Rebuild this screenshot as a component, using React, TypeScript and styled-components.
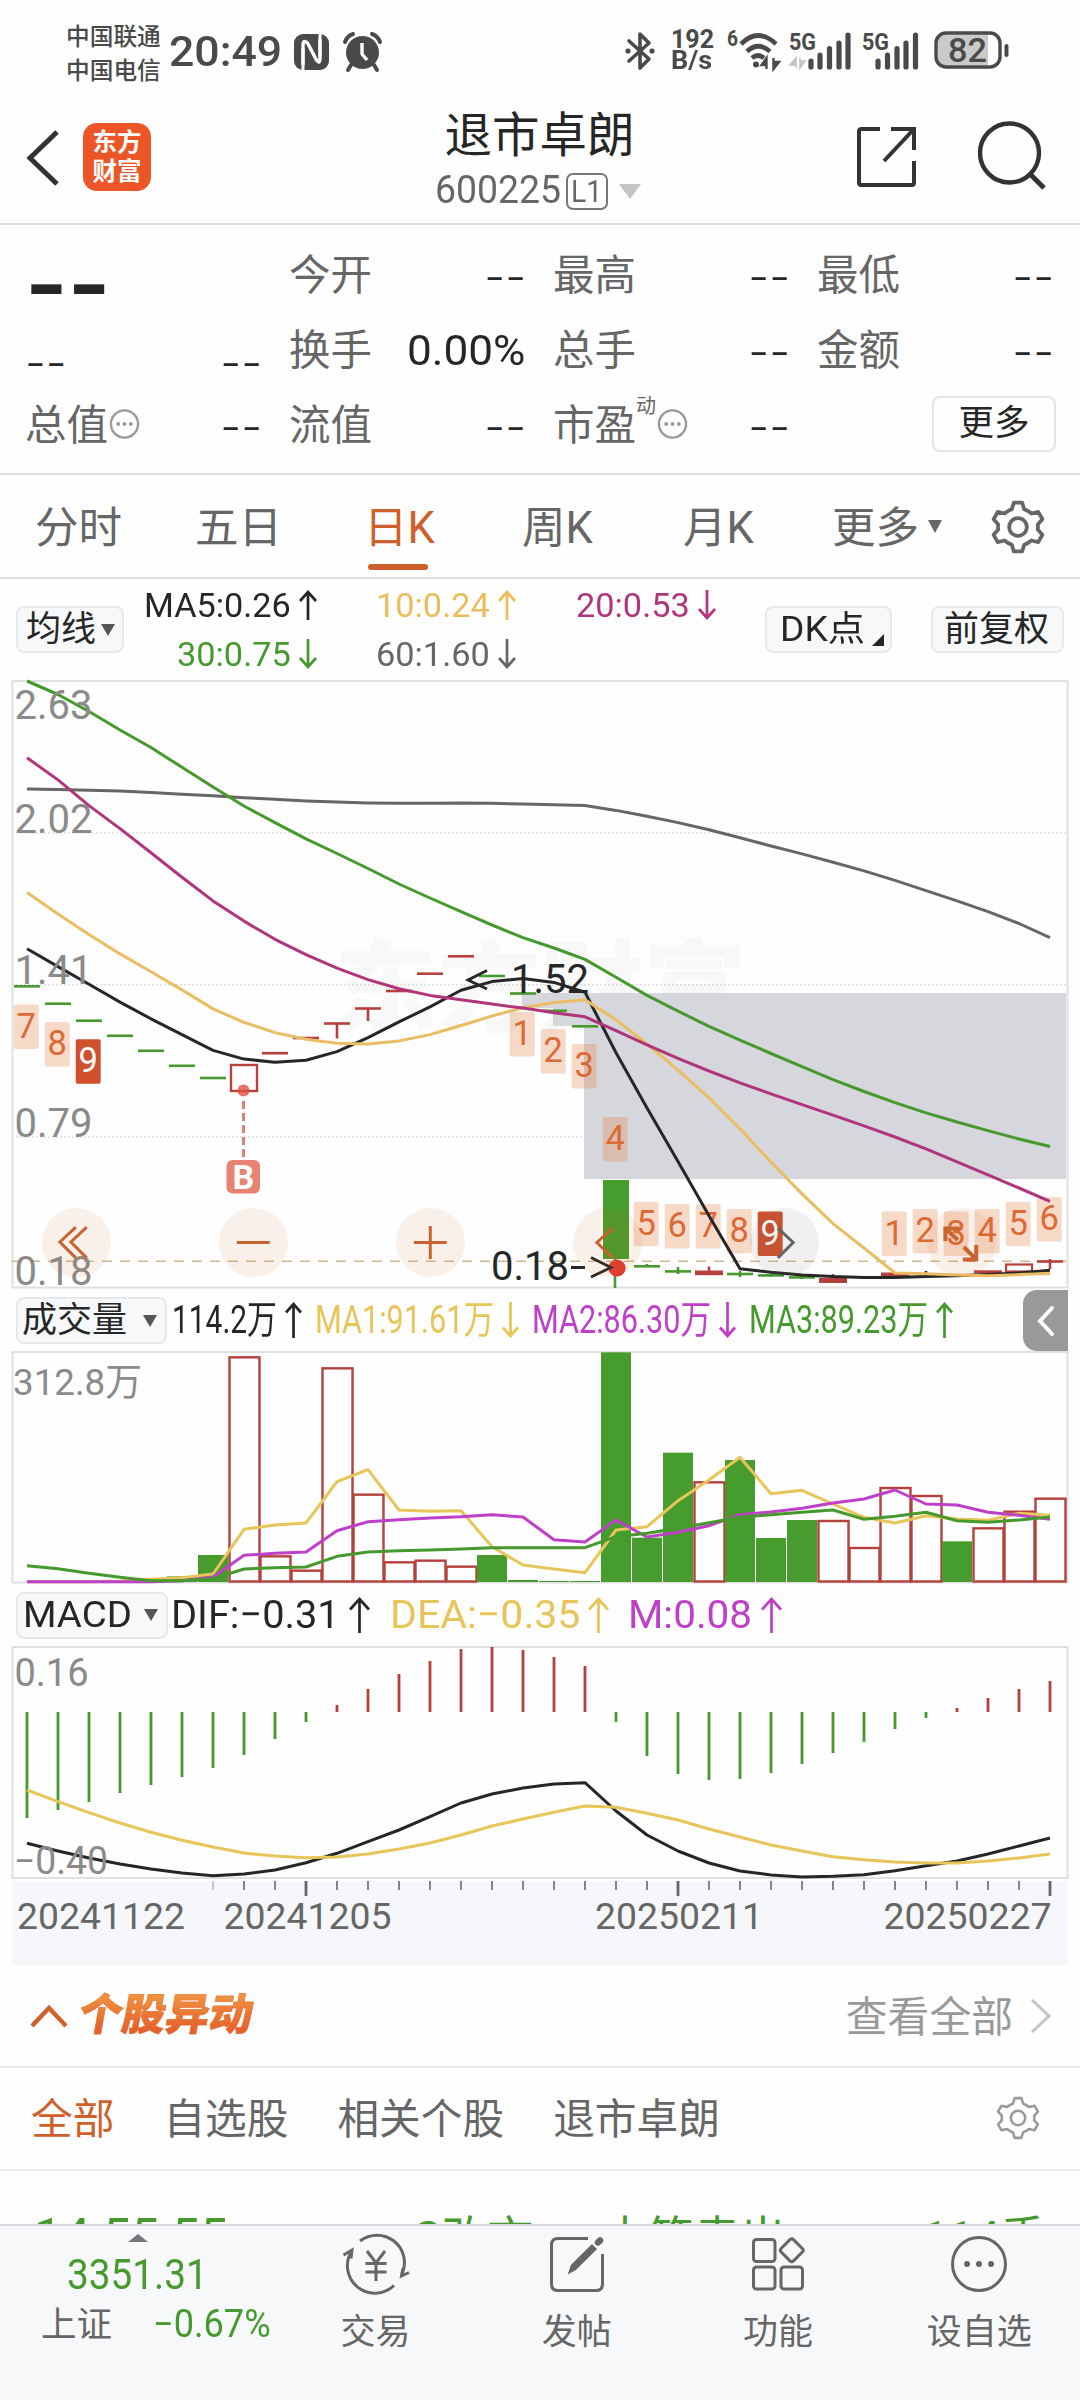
import React, { useLayoutEffect, useRef } from "react";
import styled, { createGlobalStyle, css } from "styled-components";

const INK = "#262626";
const GRAY = "#666666";
const GREEN = "#46992d";
const ACCENT = "#d0602b";

const GlobalStyle = createGlobalStyle`
  * { box-sizing: border-box; }
  html, body { margin: 0; padding: 0; background: #fefefe; }
  body { font-family: Roboto, "Noto Sans CJK SC", sans-serif; color: ${INK}; }
  button { font: inherit; color: inherit; border: 0; padding: 0; margin: 0; background: none; }
`;

/* ---------- text squeezed to a fixed column width ---------- */

const FitBox = styled.span<{ $w: number; $size: number; $color?: string; $weight?: number }>`
  display: inline-block;
  flex: none;
  width: ${(p) => p.$w}px;
  font-size: ${(p) => p.$size}px;
  line-height: 1.2;
  font-weight: ${(p) => p.$weight ?? 400};
  color: ${(p) => p.$color ?? "inherit"};
  white-space: nowrap;
`;
const FitInner = styled.span`
  display: inline-block;
  transform-origin: 0 50%;
`;

type FitProps = { w: number; size: number; color?: string; weight?: number; children: string };
function Fit({ w, size, color, weight, children }: FitProps) {
  const ref = useRef<HTMLSpanElement>(null);
  useLayoutEffect(() => {
    const el = ref.current;
    if (el) el.style.transform = `scaleX(${w / el.offsetWidth})`;
  }, [w, children]);
  return (
    <FitBox $w={w} $size={size} $color={color} $weight={weight}>
      <FitInner ref={ref}>{children}</FitInner>
    </FitBox>
  );
}

/* ---------- page ---------- */

const Page = styled.div`
  width: 1080px;
  height: 2400px;
  overflow: hidden;
  display: flex;
  flex-direction: column;
  background: #fefefe;
`;

/* ---------- status bar ---------- */

const StatusBar = styled.div`
  height: 100px;
  flex: none;
  display: flex;
  justify-content: space-between;
  padding: 20px 70px 0 66px;
  color: #4a4a4a;
`;
const StatusSide = styled.div`
  display: flex;
  align-items: flex-start;
`;
const Carriers = styled.div`
  display: flex;
  flex-direction: column;
  font-size: 23.7px;
  line-height: 34px;
  font-weight: 500;
  margin-right: 8px;
`;
const ClockText = styled.div`
  margin-top: 6px;
  font-weight: 500;
  height: 52px;
`;
const NetSpeed = styled.div`
  display: flex;
  flex-direction: column;
  margin: 10px 13px 0 16px;
  span { line-height: 20.5px; }
`;
const StatusIcon = styled.svg<{ $ml?: number; $mt?: number }>`
  display: block;
  overflow: visible;
  margin-left: ${(p) => p.$ml ?? 0}px;
  margin-top: ${(p) => p.$mt ?? 0}px;
`;

function Status() {
  return (
    <StatusBar>
      <StatusSide>
        <Carriers>
          <span>中国联通</span>
          <span>中国电信</span>
        </Carriers>
        <ClockText>
          <Fit w={113} size={43} weight={500}>20:49</Fit>
        </ClockText>
        <StatusIcon $ml={12} $mt={14} width="35" height="36" viewBox="0 0 35 36">
          <rect x="0" y="0" width="35" height="36" rx="9" fill="#4a4a4a" />
          <path d="M9 31V11Q9 5 13.500 9L22.500 26Q26 31 26 24V5" fill="none" stroke="#fefefe" strokeWidth="3.400" />
          <path d="M9 36V14M26 22V0" fill="none" stroke="#fefefe" strokeWidth="3" />
        </StatusIcon>
        <StatusIcon $ml={14} $mt={12} width="39" height="40" viewBox="0 0 39 40">
          <circle cx="19.500" cy="20.500" r="16.500" fill="#4a4a4a" />
          <path d="M2 10Q4 4 10 2M37 10Q35 4 29 2" fill="none" stroke="#4a4a4a" strokeWidth="4" strokeLinecap="round" />
          <path d="M8 33L5 38M31 33L34 38" stroke="#4a4a4a" strokeWidth="4" strokeLinecap="round" />
          <path d="M19 11V22L24 28" fill="none" stroke="#fefefe" strokeWidth="3.400" />
        </StatusIcon>
      </StatusSide>
      <StatusSide>
        <StatusIcon $mt={11} width="30" height="40" viewBox="0 0 30 40">
          <path d="M4 10L24 28L15 37V3L24 12L4 30" fill="none" stroke="#4a4a4a" strokeWidth="3.600" strokeLinejoin="round" strokeLinecap="round" />
          <circle cx="3" cy="20" r="2.600" fill="#4a4a4a" />
          <circle cx="27" cy="20" r="2.600" fill="#4a4a4a" />
        </StatusIcon>
        <NetSpeed>
          <Fit w={43} size={25} weight={700}>192</Fit>
          <Fit w={41} size={25} weight={700}>B/s</Fit>
        </NetSpeed>
        <StatusIcon $mt={8} width="54" height="44" viewBox="0 0 54 44">
          <text x="0" y="18" fontSize="22" fontWeight="700" fill="#4a4a4a" textLength="11" lengthAdjust="spacingAndGlyphs">6</text>
          <path d="M14 16Q31 -1 49 16" fill="none" stroke="#4a4a4a" strokeWidth="4.600" />
          <path d="M20 23.500Q31 13 43 23.500" fill="none" stroke="#4a4a4a" strokeWidth="4.600" />
          <path d="M25 30Q31 25 37 30" fill="none" stroke="#4a4a4a" strokeWidth="4.600" />
          <circle cx="29" cy="36.500" r="3" fill="#4a4a4a" />
          <path d="M39.500 41V30L34.500 37H39.500M46.500 30V41L52 34H46.500" fill="#4a4a4a" stroke="#4a4a4a" strokeWidth="2.400" />
        </StatusIcon>
        <StatusIcon $ml={8} $mt={10} width="63" height="42" viewBox="0 0 63 42">
          <text x="0" y="20" fontSize="24" fontWeight="700" fill="#4a4a4a" textLength="27" lengthAdjust="spacingAndGlyphs">5G</text>
          <path d="M7 38V28L1 35H7M11 28V38L16 31H11" fill="#c4c4c4" stroke="#c4c4c4" strokeWidth="1.600" />
          <path d="M22 31V37M31 25V37M40.500 18.500V37M50 13V37M59 5V37" stroke="#4a4a4a" strokeWidth="5.200" strokeLinecap="round" />
        </StatusIcon>
        <StatusIcon $ml={10} $mt={10} width="58" height="42" viewBox="0 0 58 42">
          <text x="0" y="20" fontSize="24" fontWeight="700" fill="#4a4a4a" textLength="27" lengthAdjust="spacingAndGlyphs">5G</text>
          <path d="M16 31V37M25.500 25V37M35 18.500V37M44 13V37M53.500 5V37" stroke="#4a4a4a" strokeWidth="5.200" strokeLinecap="round" />
        </StatusIcon>
        <StatusIcon $ml={14} $mt={11} width="76" height="40" viewBox="0 0 76 40">
          <path d="M54 3.500H12Q3 3.500 3 12V26Q3 34.500 12 34.500H54Z" fill="#c9c9c9" />
          <rect x="2" y="2" width="64" height="34" rx="10" fill="none" stroke="#4a4a4a" strokeWidth="3.400" />
          <path d="M72.500 15V24" stroke="#4a4a4a" strokeWidth="4" strokeLinecap="round" />
          <text x="14" y="31" fontSize="33.500" fontWeight="500" fill="#4a4a4a" textLength="39" lengthAdjust="spacingAndGlyphs">82</text>
        </StatusIcon>
      </StatusSide>
    </StatusBar>
  );
}

/* ---------- header ---------- */

const Header = styled.header`
  height: 125px;
  flex: none;
  display: grid;
  grid-template-columns: 300px 1fr 300px;
  border-bottom: 2px solid #dcdcdc;
`;
const HeaderLeft = styled.div`
  display: flex;
  align-items: flex-start;
  padding: 30px 0 0 26px;
  gap: 23px;
`;
const Logo = styled.div`
  width: 68px;
  height: 68px;
  margin-top: -7px;
  border-radius: 14px;
  background: #ec5626;
  color: #fff;
  font-weight: 700;
  font-size: 24.500px;
  line-height: 29px;
  display: flex;
  flex-direction: column;
  align-items: center;
  justify-content: center;
`;
const TitleBlock = styled.div`
  display: flex;
  flex-direction: column;
  align-items: center;
`;
const Title = styled.h1`
  margin: 5px 0 0 -1px;
  font-size: 47.5px;
  line-height: 62px;
  font-weight: 400;
`;
const CodeRow = styled.div`
  display: flex;
  align-items: center;
  margin-top: 3px;
  height: 42px;
  margin-left: -5px;
  color: ${GRAY};
`;
const Level = styled.span`
  width: 42px;
  height: 37px;
  margin: 0 11px 0 5px;
  border: 2px solid #777;
  border-radius: 7px;
  display: flex;
  align-items: center;
  justify-content: center;
`;
const Triangle = styled.span<{ $w: number; $h: number; $color: string; $up?: boolean }>`
  display: inline-block;
  flex: none;
  border-left: ${(p) => p.$w / 2}px solid transparent;
  border-right: ${(p) => p.$w / 2}px solid transparent;
  ${(p) =>
    p.$up
      ? css`border-bottom: ${p.$h}px solid ${p.$color};`
      : css`border-top: ${p.$h}px solid ${p.$color};`}
`;
const HeaderRight = styled.div`
  display: flex;
  justify-content: flex-end;
  gap: 61px;
  padding: 20px 33px 0 0;
`;

function TopHeader() {
  return (
    <Header>
      <HeaderLeft>
        <svg width="34" height="56" viewBox="0 0 34 56">
          <path d="M31 2L4 28L31 54" fill="none" stroke="#333" strokeWidth="5" />
        </svg>
        <Logo>
          <span>东方</span>
          <span>财富</span>
        </Logo>
      </HeaderLeft>
      <TitleBlock>
        <Title>退市卓朗</Title>
        <CodeRow>
          <Fit w={126} size={38}>600225</Fit>
          <Level><Fit w={31} size={32}>L1</Fit></Level>
          <Triangle $w={22} $h={15} $color="#c4c4c4" />
        </CodeRow>
      </TitleBlock>
      <HeaderRight>
        <svg width="60" height="68" viewBox="0 0 60 68">
          <path d="M23 9H4.500Q2 9 2 11.500V62.500Q2 65 4.500 65H54.500Q57 65 57 62.500V41" fill="none" stroke="#333" strokeWidth="4" />
          <path d="M27 41L57 9M34 9H57V30" fill="none" stroke="#333" strokeWidth="4" />
        </svg>
        <svg width="69" height="70" viewBox="0 0 69 70">
          <circle cx="31.500" cy="33" r="29.500" fill="none" stroke="#333" strokeWidth="4.400" />
          <path d="M52 54L66 68" stroke="#333" strokeWidth="5" />
        </svg>
      </HeaderRight>
    </Header>
  );
}

/* ---------- quote grid ---------- */

const Quote = styled.section`
  height: 250px;
  flex: none;
  padding: 13px 25px 0 25px;
  display: grid;
  grid-template-columns: repeat(4, 236px);
  grid-template-rows: repeat(3, 75px);
  column-gap: 28px;
  border-bottom: 2px solid #dcdcdc;
`;
const Cell = styled.div`
  display: flex;
  align-items: center;
  justify-content: space-between;
`;
const CellLabel = styled.span`
  display: flex;
  align-items: center;
  font-size: 41.500px;
  color: ${GRAY};
  line-height: 60px;
`;
const Dash = styled.span<{ $shift?: number }>`
  font-family: Inter, sans-serif;
  font-weight: 300;
  font-size: 46px;
  line-height: 50px;
  margin-right: -1px;
  padding-top: ${(p) => p.$shift ?? 0}px;
`;
const BigDash = styled.span`
  font-family: Inter, sans-serif;
  font-weight: 600;
  font-size: 92px;
  line-height: 60px;
  padding-top: 16px;
`;
const Sup = styled.sup`
  font-size: 20px;
  line-height: 20px;
  align-self: flex-start;
  margin-top: 0;
`;
const MoreButton = styled.button`
  justify-self: end;
  align-self: center;
  width: 124px;
  height: 56px;
  margin-right: -3px;
  margin-top: -3px;
  border: 2px solid #e4e4e4;
  border-radius: 8px;
  font-size: 35.500px;
  line-height: 46px;
  padding-bottom: 3px;
`;

const DotsSvg = styled.svg`
  margin-left: 1px;
  margin-top: -4px;
`;
const Dots = () => (
  <DotsSvg width="31" height="32" viewBox="0 0 32 32">
    <circle cx="16" cy="16" r="14" fill="none" stroke="#999" strokeWidth="2.400" />
    <circle cx="9.500" cy="16" r="2" fill="#999" />
    <circle cx="16" cy="16" r="2" fill="#999" />
    <circle cx="22.500" cy="16" r="2" fill="#999" />
  </DotsSvg>
);

function QuoteGrid() {
  return (
    <Quote>
      <Cell><BigDash>--</BigDash></Cell>
      <Cell><CellLabel>今开</CellLabel><Dash>--</Dash></Cell>
      <Cell><CellLabel>最高</CellLabel><Dash>--</Dash></Cell>
      <Cell><CellLabel>最低</CellLabel><Dash>--</Dash></Cell>
      <Cell><Dash $shift={22}>--</Dash><Dash $shift={22}>--</Dash></Cell>
      <Cell><CellLabel>换手</CellLabel><Fit w={118} size={43}>0.00%</Fit></Cell>
      <Cell><CellLabel>总手</CellLabel><Dash>--</Dash></Cell>
      <Cell><CellLabel>金额</CellLabel><Dash>--</Dash></Cell>
      <Cell><CellLabel>总值<Dots /></CellLabel><Dash>--</Dash></Cell>
      <Cell><CellLabel>流值</CellLabel><Dash>--</Dash></Cell>
      <Cell><CellLabel>市盈<Sup>动</Sup><Dots /></CellLabel><Dash>--</Dash></Cell>
      <MoreButton>更多</MoreButton>
    </Quote>
  );
}

/* ---------- period tabs ---------- */

const Tabs = styled.nav`
  height: 104px;
  flex: none;
  display: flex;
  align-items: stretch;
  padding-left: 35px;
  border-bottom: 2px solid #dcdcdc;
`;
const Tab = styled.button<{ $w: number; $active?: boolean }>`
  position: relative;
  display: flex;
  align-items: center;
  width: ${(p) => p.$w}px;
  flex: none;
  font-size: 43.500px;
  padding-bottom: 3px;
  color: ${(p) => (p.$active ? ACCENT : GRAY)};
  ${(p) =>
    p.$active &&
    css`
      &::after {
        content: "";
        position: absolute;
        left: 4px;
        bottom: 7px;
        width: 60px;
        height: 6px;
        border-radius: 3px;
        background: ${ACCENT};
      }
    `}
`;
const TabArrow = styled.span`
  display: flex;
  margin-left: 9px;
  margin-top: 3px;
`;

const Gear = ({ size, color, sw }: { size: number; color: string; sw: number }) => (
  <svg width={size} height={size} viewBox="0 0 52 52" fill="none" stroke={color} strokeWidth={sw} strokeLinejoin="round">
    <path d="M22 2.500H30L32 9Q36 10.500 39 13L45.500 11.500L49.500 18.500L45 23.500Q45.500 26 45 28.500L49.500 33.500L45.500 40.500L39 39Q36 41.500 32 43L30 49.500H22L20 43Q16 41.500 13 39L6.500 40.500L2.500 33.500L7 28.500Q6.500 26 7 23.500L2.500 18.500L6.500 11.500L13 13Q16 10.500 20 9Z" />
    <circle cx="26" cy="26" r="8.500" />
  </svg>
);
const GearDrop = styled.span`
  display: flex;
  margin-top: 4px;
`;

function PeriodTabs() {
  return (
    <Tabs>
      <Tab $w={160}>分时</Tab>
      <Tab $w={169}>五日</Tab>
      <Tab $w={158} $active>日K</Tab>
      <Tab $w={161}>周K</Tab>
      <Tab $w={149}>月K</Tab>
      <Tab $w={159}>更多<TabArrow><Triangle $w={14} $h={13} $color={GRAY} /></TabArrow></Tab>
      <Tab $w={60}><GearDrop><Gear size={54} color={GRAY} sw={3.6} /></GearDrop></Tab>
    </Tabs>
  );
}

/* ---------- chart readouts ---------- */

const Chip = styled.button<{ $w: number; $size?: number; $pl?: number }>`
  flex: none;
  width: ${(p) => p.$w}px;
  height: 47px;
  display: flex;
  align-items: center;
  padding-left: ${(p) => p.$pl ?? 10}px;
  border: 2px solid #e6e9ec;
  border-radius: 8px;
  background: #f6f8fa;
  color: ${INK};
  font-size: ${(p) => p.$size ?? 35}px;
  line-height: 42px;
  white-space: nowrap;
`;
const Corner = styled.span`
  align-self: flex-end;
  margin: 0 0 5px 10px;
  border-left: 12px solid transparent;
  border-bottom: 12px solid ${INK};
`;
const MaRow = styled.div`
  height: 101px;
  flex: none;
  display: flex;
  align-items: center;
  padding: 0 16px 0 16px;
`;
const MaGrid = styled.div`
  display: grid;
  grid-template-columns: 193px 199px 200px;
  grid-template-rows: 49px 49px;
  justify-items: end;
  align-items: center;
  flex: 1;
`;
const Reading = styled.span<{ $color: string; $gap?: number }>`
  display: flex;
  align-items: center;
  gap: ${(p) => p.$gap ?? 8}px;
  color: ${(p) => p.$color};
`;
const ChipGap = styled.div`
  display: flex;
  gap: 39px;
`;
const TabArrowTight = styled.span`
  display: flex;
  margin-left: 5px;
`;

function Arrow({ up, w, h, color }: { up?: boolean; w: number; h: number; color: string }) {
  const m = w / 2;
  const d = up
    ? `M${m} ${h}V2M1 ${m + 2}L${m} 2L${w - 1} ${m + 2}`
    : `M${m} 0V${h - 2}M1 ${h - m - 2}L${m} ${h - 2}L${w - 1} ${h - m - 2}`;
  return (
    <svg width={w} height={h} viewBox={`0 0 ${w} ${h}`}>
      <path d={d} fill="none" stroke={color} strokeWidth="2.700" />
    </svg>
  );
}

function MovingAverages() {
  const r = (t: string, w: number, c: string, up?: boolean) => (
    <Reading $color={c}>
      <Fit w={w} size={34}>{t}</Fit>
      <Arrow up={up} w={18} h={30} color={c} />
    </Reading>
  );
  return (
    <MaRow>
      <Chip $w={108} $pl={8}>均线<TabArrowTight><Triangle $w={14} $h={12} $color="#555" /></TabArrowTight></Chip>
      <MaGrid>
        {r("MA5:0.26", 147, INK, true)}
        {r("10:0.24", 114, "#ebbd5c", true)}
        {r("20:0.53", 114, "#b1357c")}
        {r("30:0.75", 114, GREEN)}
        {r("60:1.60", 114, GRAY)}
      </MaGrid>
      <ChipGap>
        <Chip $w={127} $pl={10} $size={34.5}><Fit w={85} size={35}>DK点</Fit><Corner /></Chip>
        <Chip $w={133} $pl={11}>前复权</Chip>
      </ChipGap>
    </MaRow>
  );
}

/* ---------- chart data ---------- */

const px = (i: number) => 27 + 31 * i;
const path = (ys: number[], f: (v: number) => number = (v) => v) =>
  ys.map((v, i) => `${i ? "L" : "M"}${px(i)} ${f(v).toFixed(1)}`).join("");

const MA30 = [681, 694.5, 711.5, 730, 747.5, 767.3, 787, 806, 822.6, 838.8, 853.5, 868.5, 884, 898, 911.6, 925, 937.7, 948, 959.4, 977.2, 995.4, 1011.2, 1026.3, 1040.1, 1053.5, 1066.6, 1079.6, 1091.5, 1102.6, 1112.9, 1122, 1130.6, 1139, 1146.5];
const MA20 = [757.8, 779.9, 805.6, 828.6, 852.7, 877.2, 900.9, 921.1, 939.3, 954.7, 968.1, 979.6, 988.7, 995.4, 999.8, 1004.1, 1008.1, 1012.8, 1016.8, 1030.6, 1044.8, 1058.3, 1071, 1082.8, 1093.9, 1104.6, 1115.2, 1125.9, 1137, 1148.8, 1161.9, 1174.9, 1188, 1201.4];
const MA60 = [789, 789.4, 790.2, 791, 792.6, 794.2, 795.7, 797.7, 799.3, 800.9, 802, 802.9, 803.3, 803.3, 802.9, 803.3, 804, 804.8, 805.6, 810.4, 816.3, 822.6, 829.7, 837.7, 846, 853.9, 862.2, 870.9, 880.4, 890.6, 900.9, 911.6, 923.5, 937.7];
const MA10 = [892.6, 914, 934.5, 953.9, 971.7, 989.9, 1008.9, 1022.3, 1032.6, 1039.3, 1043.3, 1044, 1040.9, 1034.6, 1025.5, 1016, 1007.7, 1002.5, 999.8, 1019.9, 1044, 1070.2, 1097.8, 1128.7, 1162.3, 1193.9, 1223.6, 1248, 1273, 1273.8, 1275, 1275.8, 1274.6, 1273.4];
const MA5 = [948.8, 966.6, 984.3, 1002.1, 1018.8, 1034.6, 1050.4, 1059.1, 1062.3, 1060.3, 1051.6, 1037.7, 1021.9, 1006.9, 990.3, 981.6, 978.4, 982.4, 992.3, 1052.8, 1108.1, 1161.5, 1215.7, 1268.7, 1272.2, 1275, 1276.6, 1277.4, 1277.4, 1276.6, 1275.8, 1274.6, 1273, 1270.2];

const CANDLE_RED = "#b5403c";
const FLAT: [number, number, string][] = [
  [0, 986.3, GREEN], [1, 1003.7, GREEN], [2, 1020.7, GREEN], [3, 1035.8, GREEN], [4, 1050.8, GREEN], [5, 1065.8, GREEN], [6, 1078, GREEN],
  [8, 1053.2, CANDLE_RED], [9, 1038, CANDLE_RED], [10, 1023.5, CANDLE_RED], [11, 1008.5, CANDLE_RED], [12, 991, CANDLE_RED], [13, 973.7, CANDLE_RED], [14, 956.3, CANDLE_RED],
  [15, 976, GREEN], [16, 993.5, GREEN], [17, 1010.8, GREEN], [18, 1026.3, GREEN],
  [20, 1266.3, GREEN], [21, 1271.4, GREEN], [23, 1274, GREEN], [24, 1275.4, GREEN], [25, 1277.4, GREEN], [33, 1261.5, CANDLE_RED],
];
const WICKS: [number, number, number, string][] = [
  [10, 1023, 1038.5, CANDLE_RED], [11, 1008, 1021, CANDLE_RED], [20, 1264, 1267, GREEN], [21, 1267, 1274, GREEN], [22, 1266.500, 1271, CANDLE_RED],
  [23, 1271, 1277, GREEN], [24, 1273.500, 1277, GREEN], [25, 1275, 1279, GREEN], [26, 1274, 1278, CANDLE_RED], [29, 1271, 1275, INK], [33, 1259, 1269, CANDLE_RED],
];
const SOLID: [number, number, number][] = [[22, 1270.5, 1275.2], [26, 1278, 1283], [28, 1272.5, 1276], [31, 1270.3, 1273.5]];
const MARKS: [number, string, number][] = [
  [0, "7", 1004.5], [1, "8", 1022], [2, "9", 1039.3],
  [16, "1", 1012], [17, "2", 1029], [18, "3", 1044], [19, "4", 1117], [20, "5", 1201.7], [21, "6", 1204], [22, "7", 1204],
  [23, "8", 1209], [24, "9", 1211.5], [28, "1", 1211.5], [29, "2", 1209], [30, "3", 1211.500], [31, "4", 1209], [32, "5", 1201.7], [33, "6", 1197],
];

const ChartWrap = styled.div<{ $h: number }>`
  position: relative;
  flex: none;
  height: ${(p) => p.$h}px;
`;
const ChartSvg = styled.svg`
  display: block;
  overflow: visible;
  font-family: Roboto, "Noto Sans CJK SC", sans-serif;
`;
const Controls = styled.div`
  position: absolute;
  left: 42px;
  bottom: 13px;
  display: flex;
  gap: 108.400px;
`;
const RoundButton = styled.button<{ $gray?: boolean }>`
  width: 68.600px;
  height: 69px;
  border-radius: 50%;
  display: flex;
  background: ${(p) => (p.$gray ? "rgba(120,120,120,0.1)" : "rgba(217,110,45,0.095)")};
`;
const CONTROLS = ["M34 19L18 34L34 50M45 19L29 34L45 50", "M18 34.500H51", "M18 34.500H51M34.500 18V51", "M40 20L24 34.500L40 50", "M28 20L43.500 34.500L28 50", "M31 32L19 21M18.500 33V20.500H33M37 39L48 50M36 51.500H49.500V37"];

function PriceChart() {
  return (
    <ChartWrap $h={610}>
      <ChartSvg width="1080" height="610" viewBox="0 680 1080 610">
        <text x="334" y="1024" fontSize="100" fontWeight="900" fill="#f8f8f8" textLength="412" lengthAdjust="spacingAndGlyphs">东方财富</text>
        {[833, 984.7, 1137].map((y) => (
          <path key={y} d={`M12 ${y}H1067`} stroke="#dedede" strokeWidth="1.500" strokeDasharray="2 2" />
        ))}
        <path d="M522 993H1066V1179H584V1026H553V1008H522Z" fill="#d6d7dc" />
        <rect x="12.500" y="681" width="1055" height="606.500" fill="none" stroke="#e0e0e0" strokeWidth="2" />
        <path d="M12 1261.300H1067" stroke="#d3b68c" strokeWidth="1.500" strokeDasharray="10 8" />
        {FLAT.map(([i, y, c]) => (
          <path key={i} d={`M${px(i) - 13} ${y}h26`} stroke={c} strokeWidth="2.600" />
        ))}
        {WICKS.map(([i, a, b, c]) => (
          <path key={i} d={`M${px(i)} ${a}V${b}`} stroke={c} strokeWidth="2.600" />
        ))}
        {SOLID.map(([i, a, b]) => (
          <rect key={i} x={px(i) - 14} y={a} width="28" height={b - a} fill={CANDLE_RED} />
        ))}
        <rect x="231" y="1065" width="26" height="26" fill="#fefefe" stroke={CANDLE_RED} strokeWidth="2.400" />
        <rect x="1006" y="1264.500" width="26" height="7" fill="#fefefe" stroke={CANDLE_RED} strokeWidth="2.200" />
        <rect x="603" y="1180" width="26" height="79" fill="#469c2c" />
        <path d="M615 1259V1288" stroke={GREEN} strokeWidth="2.600" />
        {MARKS.map(([i, t, y]) => {
          const solid = t === "9";
          return (
            <g key={i}>
              <rect x={px(i) - 13.3} y={y} width="25" height="44.500" rx="2" fill={solid ? "#cf502a" : "rgba(229,120,58,0.275)"} />
              <text x={px(i) - 0.8} y={y + 33} fontSize="34.500" textAnchor="middle" fill={solid ? "#fff" : "#dc6a36"}>{t}</text>
            </g>
          );
        })}
        <g fill="none" strokeWidth="3" strokeLinejoin="round">
          <path d={path(MA60)} stroke={GRAY} />
          <path d={path(MA30)} stroke={GREEN} />
          <path d={path(MA5)} stroke="#262626" />
          <path d={path(MA10)} stroke="#ebbd62" />
          <path d={path(MA20)} stroke="#b1357c" />
        </g>
        {([["2.63", 719], ["2.02", 833], ["1.41", 984], ["0.79", 1137], ["0.18", 1284.5]] as [string, number][]).map(([t, y]) => (
          <text key={t} x="14.500" y={y} fontSize="40" fill="#8a8a8a" textLength="78" lengthAdjust="spacingAndGlyphs">{t}</text>
        ))}
        <path d="M243.500 1101V1160" stroke="#d98273" strokeWidth="3" strokeDasharray="8 4" />
        <circle cx="243.500" cy="1090.500" r="6" fill="#e0503f" fillOpacity="0.800" />
        <rect x="226.500" y="1160" width="33.500" height="33.500" rx="6" fill="#e88271" />
        <text x="243.300" y="1189" fontSize="34" fontWeight="700" textAnchor="middle" fill="#fff">B</text>
        <text x="511" y="992.500" fontSize="40" fill={INK} textLength="78" lengthAdjust="spacingAndGlyphs">1.52</text>
        <text x="491" y="1279.500" fontSize="40" fill={INK} textLength="78" lengthAdjust="spacingAndGlyphs">0.18</text>
        <circle cx="617" cy="1268" r="8.600" fill="#e03c2e" />
        <path d="M487 970.500L468 980L487 989M571 1267.500H585M591 1257.500L611 1267.500L591 1277" fill="none" stroke={INK} strokeWidth="2.800" />
      </ChartSvg>
      <Controls>
        {CONTROLS.map((d, i) => (
          <RoundButton key={d} $gray={i === 4}>
            <svg width="69" height="69" viewBox="0 0 69 69">
              <path d={d} fill="none" stroke={i === 4 ? GRAY : "#c9632f"} strokeWidth={i === 5 ? 4 : 3} />
            </svg>
          </RoundButton>
        ))}
      </Controls>
    </ChartWrap>
  );
}

/* ---------- volume ---------- */

const ReadoutRow = styled.div<{ $h: number }>`
  height: ${(p) => p.$h}px;
  flex: none;
  display: flex;
  align-items: center;
  padding-left: 16px;
`;
const ReadGroup = styled.div<{ $ml: number; $gap: number; $color: string }>`
  display: flex;
  align-items: center;
  margin-left: ${(p) => p.$ml}px;
  gap: ${(p) => p.$gap}px;
  color: ${(p) => p.$color};
`;
const SideTab = styled.button`
  margin: 0 12px 0 auto;
  width: 45px;
  height: 61px;
  border-radius: 14px 0 0 14px;
  background: #999;
  display: flex;
  align-items: center;
  justify-content: center;
`;
const ChipArrow = styled.span`
  display: flex;
  margin-left: auto;
  margin-right: 8px;
`;

const YELLOW = "#e8c558";
const PURPLE = "#bf40c8";

const V_BARS: [number, number, "g" | "r"][] = [
  [4, 894, "g"], [5, 889, "g"], [6, 825, "g"], [7, 232, "r"], [8, 829, "r"], [9, 872, "r"], [10, 265, "r"], [11, 644, "r"], [12, 847, "r"], [13, 842, "r"], [14, 860, "r"],
  [15, 825, "g"], [16, 900, "g"], [17, 903, "g"], [18, 903, "g"], [19, 217, "g"], [20, 773, "g"], [21, 518, "g"], [22, 607, "r"], [23, 540, "g"], [24, 774, "g"], [25, 720, "g"],
  [26, 723, "r"], [27, 804, "r"], [28, 624, "r"], [29, 648, "r"], [30, 784, "g"], [31, 745, "r"], [32, 695, "r"], [33, 656, "r"],
];
const V_MA1 = [905, 905, 905, 903, 898, 893, 882, 748, 735, 729, 605, 569, 690, 694, 692, 800, 855, 867, 878, 750, 740, 662, 600, 532, 641, 631, 672, 712, 729, 707, 717, 721, 700, 706];
const V_MA2 = [905, 905, 905, 905, 905, 902, 892, 826, 820, 816, 752, 725, 719, 714, 710, 704, 711, 779, 786, 720, 771, 757, 737, 704, 696, 685, 669, 657, 630, 672, 675, 697, 706, 718];
const V_MA3 = [857, 866, 880, 892, 902, 902, 896, 867, 863, 861, 829, 816, 812, 810, 807, 803, 803, 803, 803, 770, 760, 745, 728, 712, 704, 697, 690, 718, 709, 697, 722, 727, 720, 711];
const vy = (v: number) => 1280 + v / 3;

function Volume() {
  const g = (t: string, w: number, c: string, ml: number, up?: boolean) => (
    <ReadGroup $ml={ml} $gap={8} $color={c}>
      <Fit w={w} size={39}>{t}</Fit>
      <Arrow up={up} w={17} h={36} color={c} />
    </ReadGroup>
  );
  return (
    <>
      <ReadoutRow $h={61}>
        <Chip $w={151} $pl={4}>成交量<ChipArrow><Triangle $w={15} $h={12} $color="#555" /></ChipArrow></Chip>
        {g("114.2万", 105, INK, 5, true)}
        {g("MA1:91.61万", 179, YELLOW, 13)}
        {g("MA2:86.30万", 179, PURPLE, 13)}
        {g("MA3:89.23万", 179, GREEN, 13, true)}
        <SideTab>
          <svg width="20" height="32" viewBox="0 0 20 32"><path d="M16 3L4 16L16 29" fill="none" stroke="#fff" strokeWidth="4" strokeLinecap="round" /></svg>
        </SideTab>
      </ReadoutRow>
      <ChartWrap $h={233}>
        <ChartSvg width="1080" height="233" viewBox="0 1351 1080 233">
          <rect x="12.500" y="1352" width="1055" height="230.500" fill="none" stroke="#e0e0e0" strokeWidth="2" />
          <text x="13" y="1395" fontSize="37.500" fill="#8a8a8a" textLength="129" lengthAdjust="spacingAndGlyphs">312.8万</text>
          {V_BARS.map(([i, v, k]) =>
            k === "g" ? (
              <rect key={i} x={px(i) - 15} y={vy(v)} width="30" height={1582 - vy(v)} fill="#469c2c" />
            ) : (
              <rect key={i} x={px(i) - 14.5} y={vy(v)} width="30" height={1581.5 - vy(v)} fill="#fefefe" stroke={CANDLE_RED} strokeWidth="2.400" />
            ),
          )}
          <g fill="none" strokeWidth="3" strokeLinejoin="round">
            <path d={path(V_MA1, vy)} stroke={YELLOW} />
            <path d={path(V_MA2, vy)} stroke={PURPLE} />
            <path d={path(V_MA3, vy)} stroke={GREEN} />
          </g>
        </ChartSvg>
      </ChartWrap>
    </>
  );
}

/* ---------- MACD ---------- */

const M_BARS = [714, 690, 666, 639, 615, 591, 564, 525, 477, 426, 375, 327, 282, 243, 207, 201, 210, 231, 258, 426, 528, 582, 600, 597, 579, 552, 519, 486, 447, 414, 384, 354, 327, 303];
const DIF = [790, 813, 834, 852, 867, 879, 887, 882, 870, 848, 820, 785, 750, 710, 669, 642, 624, 612, 608, 693, 765, 813, 849, 873, 885, 891, 889, 884, 872, 857, 843, 822, 798, 774];
const DEA = [630, 665, 698, 729, 757, 781, 801, 819, 828, 833, 831, 822, 807, 789, 765, 738, 717, 697, 678, 682, 700, 720, 747, 771, 795, 813, 830, 839, 846, 849, 849, 843, 834, 822];
const my = (v: number) => 1580 + v / 3;
const DATES: [string, number][] = [["20241122", 17], ["20241205", 223.5], ["20250211", 595], ["20250227", 883.5]];

function Macd() {
  const g = (t: string, w: number, c: string, ml: number, gap: number) => (
    <ReadGroup $ml={ml} $gap={gap} $color={c}>
      <Fit w={w} size={39.5}>{t}</Fit>
      <Arrow up w={21} h={36} color={c} />
    </ReadGroup>
  );
  return (
    <>
      <ReadoutRow $h={62}>
        <Chip $w={152} $pl={3}><Fit w={109} size={37}>MACD</Fit><ChipArrow><Triangle $w={15} $h={12} $color="#555" /></ChipArrow></Chip>
        {g("DIF:−0.31", 169, INK, 3, 9)}
        {g("DEA:−0.35", 190, YELLOW, 20, 8)}
        {g("M:0.08", 124, PURPLE, 19, 9)}
      </ReadoutRow>
      <ChartWrap $h={319}>
        <ChartSvg width="1080" height="319" viewBox="0 1646 1080 319">
          <rect x="12.500" y="1647" width="1055" height="231" fill="none" stroke="#e0e0e0" strokeWidth="2" />
          {M_BARS.map((v, i) => (
            <path key={i} d={`M${px(i)} 1712V${my(v)}`} stroke={v > 396 ? GREEN : CANDLE_RED} strokeWidth="2.800" />
          ))}
          <g fill="none" strokeWidth="3" strokeLinejoin="round">
            <path d={path(DIF, my)} stroke="#262626" />
            <path d={path(DEA, my)} stroke={YELLOW} />
          </g>
          <text x="14.500" y="1686" fontSize="38" fill="#8a8a8a" textLength="74" lengthAdjust="spacingAndGlyphs">0.16</text>
          <text x="14" y="1874" fontSize="38" fill="#8a8a8a" textLength="94" lengthAdjust="spacingAndGlyphs">−0.40</text>
          <rect x="12" y="1881" width="1056" height="84" fill="#f6f7fa" />
          {M_BARS.map((_, i) => {
            if (i < 6) return null;
            const major = i === 9 || i === 21 || i === 33;
            return <path key={i} d={`M${px(i)} 1881V${major ? 1896 : 1890}`} stroke={i === 6 ? "#bbb" : GRAY} strokeWidth={major ? 2.8 : 1.6} />;
          })}
          {DATES.map(([t, x]) => (
            <text key={t} x={x} y="1928.500" fontSize="37.500" fill={GRAY} textLength="168" lengthAdjust="spacingAndGlyphs">{t}</text>
          ))}
        </ChartSvg>
      </ChartWrap>
    </>
  );
}

/* ---------- stock alerts ---------- */

const AlertHead = styled.div`
  height: 103px;
  flex: none;
  display: flex;
  align-items: center;
  padding: 0 28px 0 30px;
  border-bottom: 2px solid #ebebeb;
`;
const AlertTitle = styled.h2`
  margin: 1px 0 0 11px;
  font-size: 43.500px;
  font-weight: 900;
  line-height: 56px;
  transform: skewX(-10deg);
  background: linear-gradient(180deg, #f0913f 15%, #e4602c 75%);
  -webkit-background-clip: text;
  background-clip: text;
  color: transparent;
  -webkit-text-stroke: 0.500px #e8702f;
`;
const SeeAll = styled.span`
  margin: -3px 17px 0 auto;
  font-size: 41.800px;
  color: #999;
`;
const FilterRow = styled.div`
  height: 103px;
  flex: none;
  display: flex;
  align-items: center;
  gap: 49px;
  padding: 2px 40px 0 31px;
  border-bottom: 2px solid #ebebeb;
`;
const Filter = styled.button<{ $active?: boolean }>`
  font-size: 41.700px;
  line-height: 60px;
  color: ${(p) => (p.$active ? ACCENT : GRAY)};
`;
const GearSlot = styled.span`
  display: flex;
  margin-left: auto;
  margin-top: -3px;
`;
const News = styled.div`
  height: 53px;
  flex: none;
  overflow: hidden;
  display: flex;
  align-items: flex-start;
  padding: 35px 34px 0 34px;
  font-size: 46px;
  line-height: 60px;
  color: ${GREEN};
`;
const NewsPart = styled.span<{ $w?: number; $right?: boolean; $drop?: number }>`
  flex: ${(p) => (p.$w ? "none" : "1")};
  width: ${(p) => (p.$w ? `${p.$w}px` : "auto")};
  margin-top: ${(p) => p.$drop ?? 0}px;
  text-align: ${(p) => (p.$right ? "right" : "left")};
  white-space: nowrap;
`;

function Alerts() {
  return (
    <>
      <AlertHead>
        <svg width="38" height="24" viewBox="0 0 38 24"><path d="M2 22L19 4L36 22" fill="none" stroke={ACCENT} strokeWidth="4.400" /></svg>
        <AlertTitle>个股异动</AlertTitle>
        <SeeAll>查看全部</SeeAll>
        <svg width="22" height="36" viewBox="0 0 22 36"><path d="M2 2L19 18L2 34" fill="none" stroke="#c4c4c4" strokeWidth="3" /></svg>
      </AlertHead>
      <FilterRow>
        <Filter $active>全部</Filter>
        <Filter>自选股</Filter>
        <Filter>相关个股</Filter>
        <Filter>退市卓朗</Filter>
        <GearSlot><Gear size={44} color="#999" sw={3} /></GearSlot>
      </FilterRow>
      <News>
        <NewsPart $w={380}><Fit w={194} size={49}>14:55:55</Fit></NewsPart>
        <NewsPart $w={188} $drop={2}>S改市</NewsPart>
        <NewsPart $w={210} $drop={2}>大笔卖出</NewsPart>
        <NewsPart $right $drop={2}>114手</NewsPart>
      </News>
    </>
  );
}

/* ---------- bottom bar ---------- */

const BottomBar = styled.footer`
  flex: 1;
  display: grid;
  grid-template-columns: 275px repeat(4, 201.250px);
  background: #f7f8fa;
  border-top: 2px solid #d6d9de;
`;
const IndexBox = styled.div`
  display: flex;
  flex-direction: column;
  align-items: center;
  padding-top: 8px;
`;
const IndexRow = styled.div`
  display: flex;
  align-items: center;
  gap: 41px;
  margin-top: 0;
  margin-left: 37px;
  font-size: 35.500px;
  color: ${GRAY};
  line-height: 42px;
`;
const IndexValue = styled.div`
  margin-top: 8px;
  height: 52px;
`;
const Action = styled.button`
  display: flex;
  flex-direction: column;
  align-items: center;
  padding-top: 8px;
  font-size: 35px;
  line-height: 46px;
  color: ${GRAY};
  svg { margin-bottom: 16px; overflow: visible; }
`;

const icon = (children: React.ReactNode) => (
  <svg width="66" height="60" viewBox="0 0 66 60" fill="none" stroke={GRAY} strokeWidth="3">
    {children}
  </svg>
);

function Bottom() {
  return (
    <BottomBar>
      <IndexBox>
        <Triangle $w={20} $h={8} $color="#77777b" $up />
        <IndexValue><Fit w={141} size={42} color={GREEN}>3351.31</Fit></IndexValue>
        <IndexRow>
          <span>上证</span>
          <Fit w={118} size={38} color={GREEN}>−0.67%</Fit>
        </IndexRow>
      </IndexBox>
      <Action>
        {icon(
          <>
            <path d="M17 7A27.500 27.500 0 0 1 59 40" />
            <path d="M60 34L58.500 42L66 38.500" />
            <path d="M51 51.500A27.500 27.500 0 0 1 9 16.500" />
            <path d="M0.500 21L9 16L8 24.500" />
            <path d="M24 17L33 29L42 17M33 29V47M22.500 29.500H43.500M22.500 38H43.500" />
          </>,
        )}
        交易
      </Action>
      <Action>
        {icon(
          <>
            <path d="M44 4.500H14Q7.500 4.500 7.500 11V50Q7.500 56.500 14 56.500H52Q58.500 56.500 58.500 50V20" />
            <path d="M25 39L27.500 31.500L48 11L52 15L31.500 35.500Z" fill={GRAY} strokeWidth="1.500" />
            <path d="M54 8.500L56 6.500" strokeWidth="6.500" strokeLinecap="round" />
          </>,
        )}
        发帖
      </Action>
      <Action>
        {icon(
          <>
            <rect x="8.500" y="5.500" width="21.500" height="22" rx="3" />
            <rect x="8.500" y="33" width="21.500" height="22" rx="3" />
            <rect x="36" y="33" width="21.500" height="22" rx="3" />
            <rect x="38" y="7.500" width="17.500" height="17.500" rx="2.500" transform="rotate(45 46.750 16.250)" />
          </>,
        )}
        功能
      </Action>
      <Action>
        {icon(
          <>
            <circle cx="33" cy="30" r="26.500" />
            {[21, 33, 45].map((x) => <circle key={x} cx={x} cy="30" r="3" fill={GRAY} stroke="none" />)}
          </>,
        )}
        设自选
      </Action>
    </BottomBar>
  );
}

export default function App() {
  return (
    <Page>
      <GlobalStyle />
      <Status />
      <TopHeader />
      <QuoteGrid />
      <PeriodTabs />
      <MovingAverages />
      <PriceChart />
      <Volume />
      <Macd />
      <Alerts />
      <Bottom />
    </Page>
  );
}
